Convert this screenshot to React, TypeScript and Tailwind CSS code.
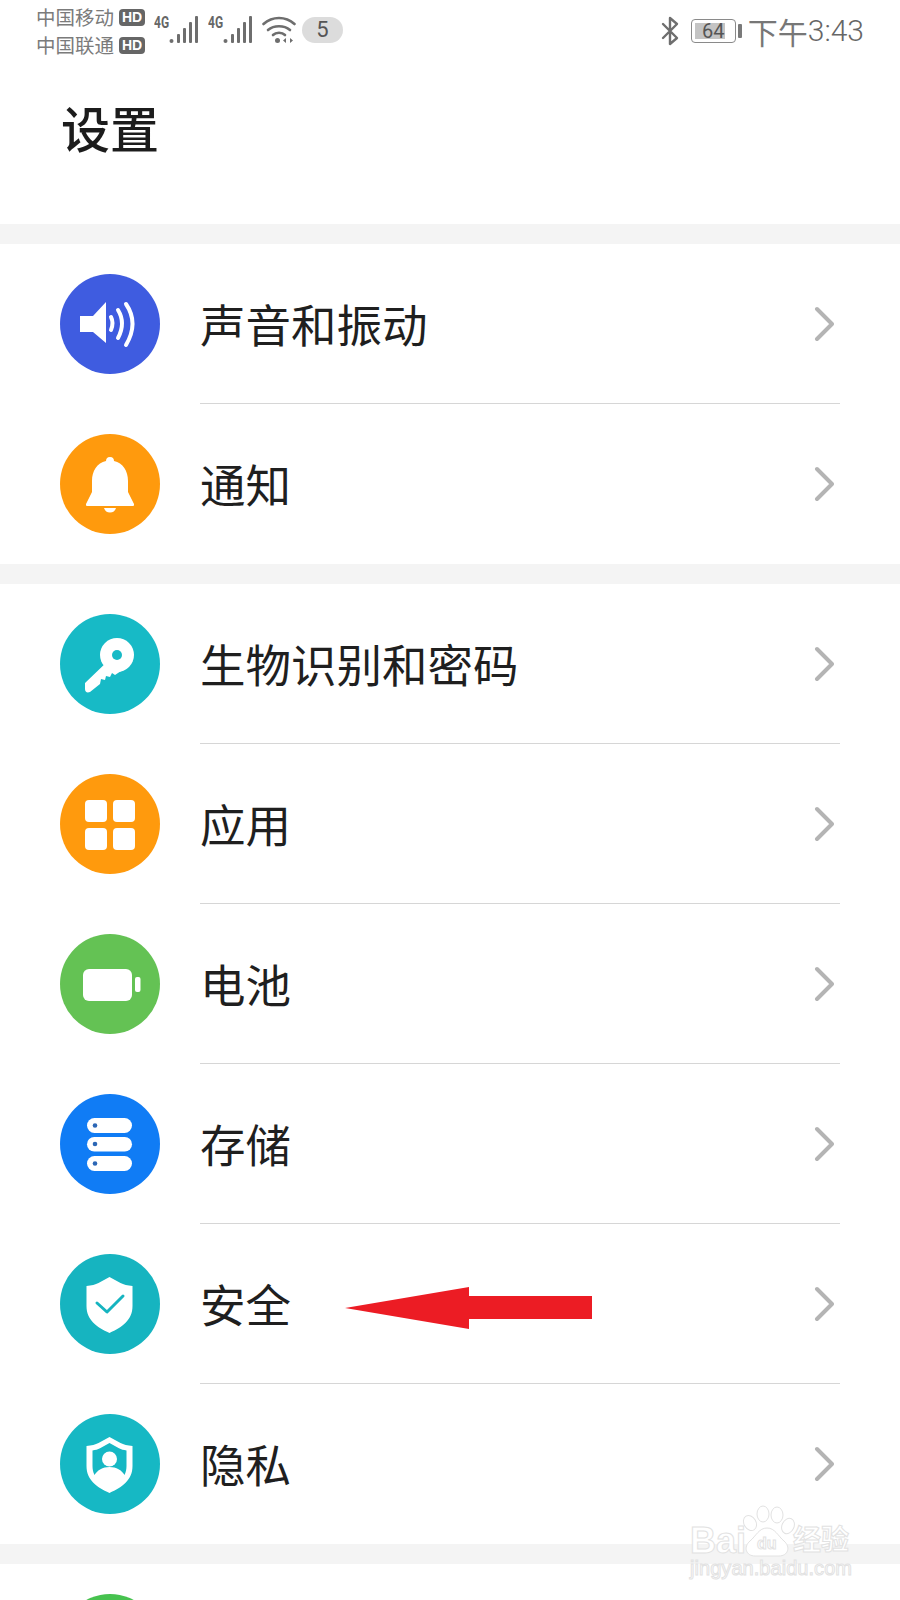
import type { ReactNode } from 'react';

const cjk = "font-['Noto_Sans_CJK_SC','Noto_Sans',sans-serif]";

const Disc = ({ bg, children }: { bg: string; children?: ReactNode }) => (
  <div className={`h-[100px] w-[100px] shrink-0 rounded-full ${bg}`}>
    <svg viewBox="0 0 100 100" className="h-full w-full">
      {children}
    </svg>
  </div>
);

const SoundIcon = () => (
  <>
    <path d="M20 42h13l13-14v41L33 58H20z" fill="#fff" />
    <g fill="none" stroke="#fff" strokeWidth="4" strokeLinecap="round">
      <path d="M51 43q3 6 0 13" />
      <path d="M58 36q8 13 0 28" />
      <path d="M66 30q13 19 0 41" />
    </g>
  </>
);

const BellIcon = () => (
  <>
    <path d="M50 23c3 0 4 2 4 4 9 2 14 10 14 20v11l6 12q.5 2-1 2H27q-1.500 0-1-2l6-12V47c0-10 5-18 14-20 0-2 1-4 4-4z" fill="#fff" />
    <path d="M44 74h12c-1 3-3 4.500-6 4.500s-5-1.500-6-4.500z" fill="#fff" />
  </>
);

const KeyIcon = () => (
  <>
    <path d="M50 45l14 10-9 6-3-2-2 4-4-1-1 4-4-1-1 5-10 8c-3 1-5 0-5-3v-6z" fill="#fff" />
    <circle cx="57" cy="41" r="17" fill="#fff" />
    <circle cx="57" cy="41" r="5" fill="#17bac6" />
  </>
);

const AppsIcon = () => (
  <g fill="#fff">
    <rect x="25" y="26" width="22" height="22" rx="4" />
    <rect x="53" y="26" width="22" height="22" rx="4" />
    <rect x="25" y="54" width="22" height="22" rx="4" />
    <rect x="53" y="54" width="22" height="22" rx="4" />
  </g>
);

const BatteryIcon = () => (
  <g fill="#fff">
    <rect x="23" y="35" width="49" height="32" rx="6" />
    <rect x="75" y="43" width="5.500" height="15" rx="2" />
  </g>
);

const StorageIcon = () => (
  <>
    <g fill="#fff">
      <rect x="27" y="24" width="45" height="15" rx="7.500" />
      <rect x="27" y="43" width="45" height="14.500" rx="7.250" />
      <rect x="27" y="62" width="45" height="15" rx="7.500" />
    </g>
    <g fill="#2b66b5">
      <circle cx="35" cy="31.500" r="2.300" />
      <circle cx="35" cy="50" r="2.300" />
      <circle cx="35" cy="69.500" r="2.300" />
    </g>
  </>
);

const shield = 'M49.500 23l11 6c3 1.500 7 2.500 12 3v20c0 14-10 21-23 27-13-6-23-13-23-27V32c5-.5 9-1.500 12-3z';

const SecurityIcon = () => (
  <>
    <path d={shield} fill="#fff" />
    <path d="M37 49l10 9 16-16" fill="none" stroke="#16b4c0" strokeWidth="3" strokeLinecap="round" strokeLinejoin="round" />
  </>
);

const PrivacyIcon = () => (
  <>
    <path d={shield} fill="#fff" />
    <path d="M49.500 29l9 5c3 1.500 5 2 8 2.500V52c0 3-.5 6-2 9-3-5-8-8-15-8s-12 3-15 8c-1.500-3-2-6-2-9V36.500c3-.5 5-1 8-2.500z" fill="#16b8c4" />
    <circle cx="49.500" cy="45" r="7.500" fill="#fff" />
  </>
);

const Chevron = () => (
  <svg viewBox="0 0 20 36" className="h-[36px] w-[20px] shrink-0">
    <path d="M3 3l15 15L3 33" fill="none" stroke="#b4b4b4" strokeWidth="4" strokeLinecap="round" strokeLinejoin="round" />
  </svg>
);

const Row = ({ icon, bg, label, last }: { icon?: ReactNode; bg: string; label: string; last?: boolean }) => (
  <div className="flex h-[160px] items-center pl-[60px]">
    <Disc bg={bg}>{icon}</Disc>
    <div className={`ml-[40px] mr-[60px] flex h-full flex-1 items-center justify-between pr-[6px] ${last ? '' : 'border-b border-[#d6d6d6]'}`}>
      <span className={`${cjk} text-[45.500px] leading-none text-[#1f1f1f]`}>{label}</span>
      <Chevron />
    </div>
  </div>
);

const Band = () => <div className="h-[20px] bg-[#f4f4f4]" />;

const Carrier = ({ name }: { name: string }) => (
  <div className="flex h-[28px] items-center gap-[5px]">
    <span className={`${cjk} text-[19.500px] leading-none text-[#7b7b7b]`}>{name}</span>
    <span className="flex h-[17px] w-[26px] items-center justify-center rounded-[4px] bg-[#666] font-['Liberation_Sans',sans-serif] text-[14px] font-bold leading-none text-white">
      HD
    </span>
  </div>
);

const Signal = () => (
  <div className="relative h-[30px] w-[46px]">
    <span className="absolute left-0 top-0 origin-left scale-x-75 font-['Roboto',sans-serif] text-[16px] font-bold leading-none text-[#666]">4G</span>
    <svg viewBox="0 0 46 30" className="h-full w-full">
      <g fill="#6e6e6e">
        <circle cx="17.500" cy="26" r="2" />
        <rect x="23" y="19" width="3" height="9" rx="1" />
        <rect x="29" y="13" width="3" height="15" rx="1" />
        <rect x="35" y="7" width="3" height="21" rx="1" />
        <rect x="41" y="1" width="3" height="27" rx="1" />
      </g>
    </svg>
  </div>
);

const Wifi = () => (
  <svg viewBox="0 0 34 28" className="h-[28px] w-[34px]">
    <g fill="none" stroke="#6e6e6e" strokeWidth="2.600" strokeLinecap="round">
      <path d="M1.500 8c9-8 22-8 31 0" />
      <path d="M6 14c6-5 16-5 22 0" />
      <path d="M11 19c3-3 9-3 12 0" />
    </g>
    <circle cx="15.500" cy="24.500" r="2.500" fill="#6e6e6e" />
    <path d="M24 22v5l-3-2.500zM28 22v5l3-2.500z" fill="#6e6e6e" />
  </svg>
);

const StatusBar = () => (
  <div className="flex h-[64px] items-center pl-[36px] pr-[36px]">
    <div className="flex flex-col pb-[2px]">
      <Carrier name="中国移动" />
      <Carrier name="中国联通" />
    </div>
    <div className="ml-[9px] flex items-center gap-[8px] pb-[4px]">
      <Signal />
      <Signal />
      <Wifi />
      <div className="-ml-[2px] flex h-[26px] w-[41px] items-center justify-center rounded-full bg-[#dcdcdc] font-['Roboto',sans-serif] text-[22px] leading-none text-[#555]">
        5
      </div>
    </div>
    <div className="ml-auto flex items-center pb-[3px]">
      <svg viewBox="0 0 20 30" className="h-[30px] w-[20px]">
        <path d="M3 8l14 14-7 6V2l7 6L3 22" fill="none" stroke="#6e6e6e" strokeWidth="2.400" strokeLinejoin="round" strokeLinecap="round" />
      </svg>
      <div className="ml-[11px] flex items-center gap-[2px]">
        <div className="relative flex h-[24px] w-[45px] items-center justify-center rounded-[4px] border border-[#8a8a8a] p-[2px]">
          <div className="absolute bottom-[3px] left-[3px] top-[3px] w-[30px] bg-[#c4c4c4]" />
          <span className="relative font-['Roboto',sans-serif] text-[20px] leading-none text-[#555]">64</span>
        </div>
        <div className="h-[14px] w-[4px] rounded-[1px] bg-[#7a7a7a]" />
      </div>
      <span className={`${cjk} ml-[6px] text-[30px] leading-none text-[#777]`}>下午</span>
      <span className="font-['Roboto',sans-serif] text-[30px] font-light leading-none text-[#666]">3:43</span>
    </div>
  </div>
);

const Watermark = () => (
  <svg viewBox="0 0 180 80" className="absolute left-[685px] top-[1505px] h-[80px] w-[180px]">
    <g fill="#fff" stroke="#e2e2e2" strokeWidth="1">
      <ellipse cx="65" cy="18" rx="6" ry="8" transform="rotate(-30 65 18)" />
      <ellipse cx="78" cy="9" rx="6" ry="8" />
      <ellipse cx="92" cy="10" rx="6" ry="8" />
      <ellipse cx="103" cy="21" rx="6" ry="8" transform="rotate(25 103 21)" />
      <path d="M82 23c8 0 11 8 17 13 7 6 4 15-5 15H70c-9 0-12-9-5-15 6-5 9-13 17-13z" />
    </g>
    <g fontFamily="'Liberation Sans', sans-serif" fill="#fff" stroke="#e2e2e2" strokeWidth="1">
      <text x="5" y="48" fontSize="36" fontWeight="700">Bai</text>
      <text x="72" y="44" fontSize="16" fontWeight="700">du</text>
      <text x="5" y="70" fontSize="20" textLength="162">jingyan.baidu.com</text>
    </g>
    <text x="108" y="45" fontFamily="'Noto Sans CJK SC', sans-serif" fontSize="28" fontWeight="700" fill="#fff" stroke="#e2e2e2" strokeWidth="1">经验</text>
  </svg>
);

export default function App() {
  return (
    <div className="relative h-[1600px] overflow-hidden bg-white">
      <StatusBar />
      <div className="flex h-[160px] items-start pl-[61px] pt-[38px]">
        <h1 className={`${cjk} text-[49px] font-medium leading-none text-[#1c1c1c]`}>设置</h1>
      </div>
      <Band />
      <Row icon={<SoundIcon />} bg="bg-[#3f5ce0]" label="声音和振动" />
      <Row icon={<BellIcon />} bg="bg-[#ff9a0d]" label="通知" last />
      <Band />
      <Row icon={<KeyIcon />} bg="bg-[#17bac6]" label="生物识别和密码" />
      <Row icon={<AppsIcon />} bg="bg-[#ff9a0d]" label="应用" />
      <Row icon={<BatteryIcon />} bg="bg-[#64c254]" label="电池" />
      <Row icon={<StorageIcon />} bg="bg-[#107cf5]" label="存储" />
      <Row icon={<SecurityIcon />} bg="bg-[#16b4c0]" label="安全" />
      <Row icon={<PrivacyIcon />} bg="bg-[#16b8c4]" label="隐私" last />
      <Band />
      <div className="pl-[60px] pt-[30px]">
        <Disc bg="bg-[#47c24f]" />
      </div>

      {/* annotation arrow pasted over the screenshot */}
      <svg viewBox="0 0 250 44" className="absolute left-[345px] top-[1287px] h-[44px] w-[250px]">
        <path d="M0 21 124 0V9H247V32H124V42z" fill="#ec1c24" />
      </svg>
      <Watermark />
    </div>
  );
}
